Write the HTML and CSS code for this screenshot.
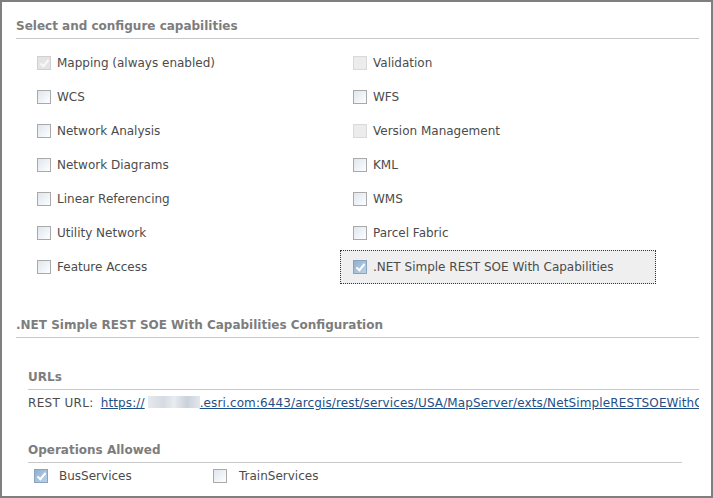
FILE: index.html
```html
<!DOCTYPE html>
<html>
<head>
<meta charset="utf-8">
<link rel="stylesheet" href="styles.css">
</head>
<body>
<div class="frame">
  <h2 class="section-title">Select and configure capabilities</h2>
  <div class="caps">
    <label class="cap"><span class="cb disabled checked"></span><span>Mapping (always enabled)</span></label>
    <label class="cap"><span class="cb disabled"></span><span>Validation</span></label>
    <label class="cap"><span class="cb"></span><span>WCS</span></label>
    <label class="cap"><span class="cb"></span><span>WFS</span></label>
    <label class="cap"><span class="cb"></span><span>Network Analysis</span></label>
    <label class="cap"><span class="cb disabled"></span><span>Version Management</span></label>
    <label class="cap"><span class="cb"></span><span>Network Diagrams</span></label>
    <label class="cap"><span class="cb"></span><span>KML</span></label>
    <label class="cap"><span class="cb"></span><span>Linear Referencing</span></label>
    <label class="cap"><span class="cb"></span><span>WMS</span></label>
    <label class="cap"><span class="cb"></span><span>Utility Network</span></label>
    <label class="cap"><span class="cb"></span><span>Parcel Fabric</span></label>
    <label class="cap"><span class="cb"></span><span>Feature Access</span></label>
    <label class="cap focused"><span class="cb checked"></span><span>.NET Simple REST SOE With Capabilities</span></label>
  </div>

  <h2 class="section-title second">.NET Simple REST SOE With Capabilities Configuration</h2>

  <div class="config">
    <h3 class="sub-title">URLs</h3>
    <div class="url-row"><span class="url-label">REST URL:</span><a class="link" href="#">https://<span class="blur"></span>.esri.com:6443/arcgis/rest/services/USA/MapServer/exts/NetSimpleRESTSOEWithCapabilities</a></div>

    <h3 class="sub-title ops">Operations Allowed</h3>
    <div class="ops-row">
      <label class="op op-first"><span class="cb checked"></span><span>BusServices</span></label>
      <label class="op"><span class="cb"></span><span>TrainServices</span></label>
    </div>
  </div>
</div>
</body>
</html>
```

FILE: styles.css
```css
html, body {
  margin: 0;
  padding: 0;
  background: #fff;
}
.frame {
  box-sizing: border-box;
  width: 713px;
  height: 498px;
  border: 2px solid #7f7f7f;
  padding: 0 12px 0 14px;
  overflow: hidden;
  font-family: "DejaVu Sans", Verdana, sans-serif;
  font-size: 12px;
  color: #4b4b4b;
}
.section-title {
  margin: 0;
  padding-top: 17px;
  padding-bottom: 5px;
  font-size: 12px;
  line-height: 14px;
  font-weight: bold;
  color: #7d7d7d;
  border-bottom: 1px solid #c8c8c8;
}
.caps {
  display: grid;
  grid-template-columns: 316px 316px;
  grid-auto-rows: 34px;
  margin-top: 7px;
  padding-left: 8px;
}
.cap {
  display: flex;
  align-items: center;
  padding-left: 13px;
  box-sizing: border-box;
}
.cap .cb {
  margin-right: 6px;
}
.cap.focused {
  background: #efefef;
  outline: 1px dotted #333;
  outline-offset: -1px;
}
.cb {
  box-sizing: border-box;
  width: 14px;
  height: 14px;
  flex: none;
  border: 1px solid #a9a9a9;
  background: linear-gradient(135deg, #dfe6ee 0%, #f4f7fa 70%, #ffffff 100%);
  position: relative;
}
.cb.disabled {
  border-color: #d9d9d9;
  background: #ececec;
}
.cb.checked {
  border-color: #8aa3bd;
  background: linear-gradient(135deg, #8fb1d3 0%, #bcd2e8 100%);
}
.cb.checked::after {
  content: "";
  position: absolute;
  left: 4px;
  top: 1px;
  width: 3px;
  height: 7px;
  border: solid #fff;
  border-width: 0 2px 2px 0;
  transform: rotate(40deg);
}
.cb.disabled.checked {
  border-color: #d0d0d0;
  background: #e4e4e4;
}
.cb.disabled.checked::after {
  border-color: #f8f8f8;
}
.section-title.second {
  padding-top: 34px;
}
.config {
  padding-left: 12px;
}
.sub-title {
  margin: 0;
  padding-top: 32px;
  padding-bottom: 5px;
  font-size: 12px;
  line-height: 14px;
  font-weight: bold;
  color: #7d7d7d;
  border-bottom: 1px solid #c8c8c8;
}
.url-row {
  margin-top: 6px;
  white-space: nowrap;
  overflow: hidden;
  line-height: 15px;
}
.url-label {
  display: inline-block;
  letter-spacing: 0.35px;
  margin-right: 7px;
}
.link {
  color: #1f4f87;
  text-decoration: underline;
  letter-spacing: 0.12px;
}
.blur {
  display: inline-block;
  width: 52px;
  height: 12px;
  margin-left: 3px;
  vertical-align: -1px;
  background: linear-gradient(90deg, #e6e9ee 0%, #d5dbe3 30%, #e9ecf0 50%, #c9d1db 75%, #e4e8ed 100%);
}
.sub-title.ops {
  padding-top: 32px;
  margin-right: 17px;
}
.ops-row {
  display: flex;
  align-items: center;
  height: 26px;
  padding-left: 6px;
}
.op {
  display: flex;
  align-items: center;
}
.op .cb {
  margin-right: 11px;
}
.op-first {
  width: 179px;
}
.op-first + .op .cb {
  margin-right: 12px;
}
```
